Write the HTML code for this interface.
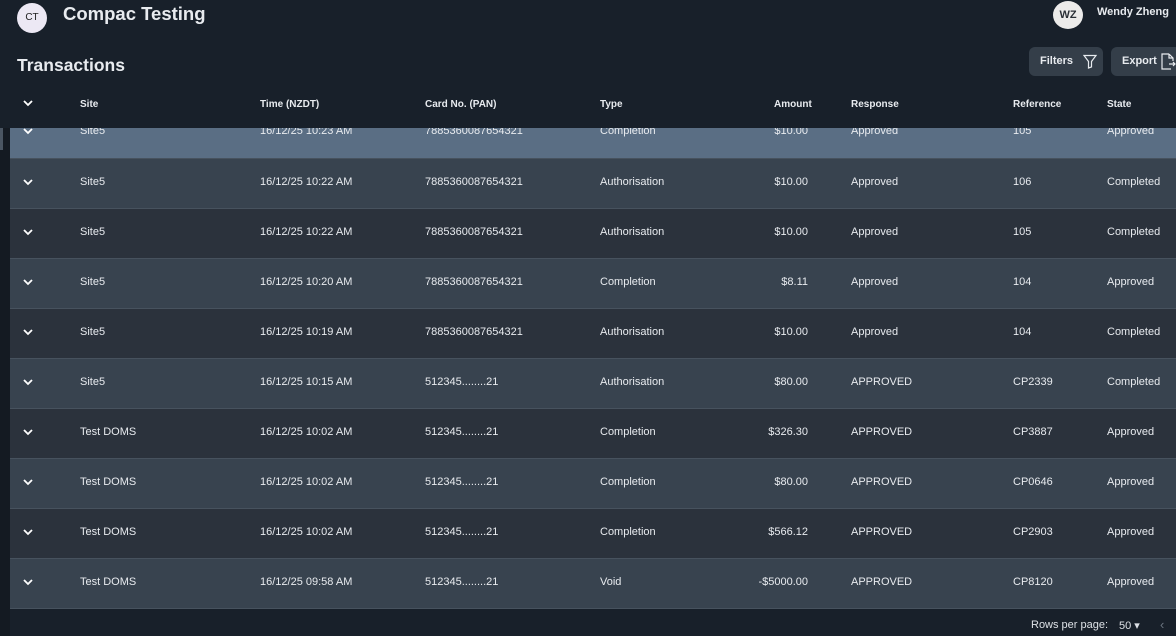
<!DOCTYPE html>
<html><head><style>
*{margin:0;padding:0;box-sizing:border-box}
body{width:1176px;height:636px;background:#18202a;font-family:"Liberation Sans",sans-serif;color:#e8ebef;position:relative;overflow:hidden}
.abs{position:absolute}
.row{position:absolute;left:10px;width:1166px;height:50px;font-size:11px;border-top:1px solid #47525e}
.row span{position:absolute;top:17px;white-space:nowrap}
.hdr span{position:absolute;font-size:10px;font-weight:bold;top:99px}
</style></head><body>
<div class="abs" style="left:0;top:128px;width:10px;height:508px;background:#141a22"></div>
<div class="abs" style="left:0;top:128px;width:3px;height:22px;background:#4a5562"></div>
<div class="abs" style="left:17px;top:3px;width:30px;height:30px;border-radius:50%;background:#ece8f4;color:#222;font-size:10px;text-align:center;line-height:30px">CT</div>
<div class="abs" style="left:63px;top:3px;font-size:18.5px;font-weight:bold">Compac Testing</div>
<div class="abs" style="left:1053px;top:1px;width:30px;height:28px;border-radius:50%;background:#ecebea;color:#2a2f36;font-size:11px;font-weight:bold;text-align:center;line-height:28px">WZ</div>
<div class="abs" style="left:1097px;top:6px;font-size:11px;font-weight:bold">Wendy Zheng</div>
<div class="abs" style="left:17px;top:55px;font-size:17.5px;font-weight:bold">Transactions</div>
<div class="abs" style="left:1029px;top:47px;width:74px;height:29px;border-radius:6px;background:#343e49;font-size:11px;font-weight:bold;line-height:29px;padding-left:11px">Filters
<svg class="abs" style="left:54px;top:7px" width="14" height="15" viewBox="0 0 14 15"><path d="M1 1.5h12L8.5 7.5v5.5L5.5 14V7.5z" fill="none" stroke="#e8ebef" stroke-width="1.2"/></svg></div>
<div class="abs" style="left:1111px;top:47px;width:70px;height:29px;border-radius:6px;background:#343e49;font-size:11px;font-weight:bold;line-height:29px;padding-left:11px">Export
<svg class="abs" style="left:49px;top:6px" width="16" height="17" viewBox="0 0 16 17"><path d="M9 1H2v15h9M9 1v4h4M9 1l4 4v3M9 11h6m-2-2l2 2-2 2" fill="none" stroke="#e8ebef" stroke-width="1.2"/></svg></div>
<div class="hdr">
<svg class="abs" style="left:22px;top:99px" width="12" height="8" viewBox="0 0 12 8"><path d="M2 2l4 4 4-4" fill="none" stroke="#fff" stroke-width="1.8"/></svg>
<span style="left:80px">Site</span><span style="left:260px">Time (NZDT)</span><span style="left:425px">Card No. (PAN)</span><span style="left:600px">Type</span><span style="left:774px">Amount</span><span style="left:851px">Response</span><span style="left:1013px">Reference</span><span style="left:1107px">State</span>
</div>
<div id="rows"></div>
<script>
var d=[["Site5","16/12/25 10:23 AM","7885360087654321","Completion","$10.00","Approved","105","Approved"],
["Site5","16/12/25 10:22 AM","7885360087654321","Authorisation","$10.00","Approved","106","Completed"],
["Site5","16/12/25 10:22 AM","7885360087654321","Authorisation","$10.00","Approved","105","Completed"],
["Site5","16/12/25 10:20 AM","7885360087654321","Completion","$8.11","Approved","104","Approved"],
["Site5","16/12/25 10:19 AM","7885360087654321","Authorisation","$10.00","Approved","104","Completed"],
["Site5","16/12/25 10:15 AM","512345........21","Authorisation","$80.00","APPROVED","CP2339","Completed"],
["Test DOMS","16/12/25 10:02 AM","512345........21","Completion","$326.30","APPROVED","CP3887","Approved"],
["Test DOMS","16/12/25 10:02 AM","512345........21","Completion","$80.00","APPROVED","CP0646","Approved"],
["Test DOMS","16/12/25 10:02 AM","512345........21","Completion","$566.12","APPROVED","CP2903","Approved"],
["Test DOMS","16/12/25 09:58 AM","512345........21","Void","-$5000.00","APPROVED","CP8120","Approved"]];
var h="";
d.forEach(function(r,i){
var top=108+i*50,bg=i==0?"#5a6e84":(i%2?"#38434f":"#2b323c");
var st=i==0?"top:128px;height:30px;border-top:none;":"top:"+(top)+"px;";
var inner=i==0?'<div style="position:absolute;left:0;top:-20px;width:100%;height:50px">':'<div style="position:absolute;left:0;top:0;width:100%;height:50px">';
h+='<div class="row" style="'+st+'background:'+bg+';overflow:hidden">'+inner+
'<svg class="abs" style="left:12px;top:19px" width="12" height="8" viewBox="0 0 12 8"><path d="M2 2l4 4 4-4" fill="none" stroke="#fff" stroke-width="1.8"/></svg>'+
'<span style="left:70px">'+r[0]+'</span><span style="left:250px">'+r[1]+'</span><span style="left:415px">'+r[2]+'</span><span style="left:590px">'+r[3]+'</span><span style="right:368px">'+r[4]+'</span><span style="left:841px">'+r[5]+'</span><span style="left:1003px">'+r[6]+'</span><span style="left:1097px">'+r[7]+'</span></div></div>';
});
document.getElementById("rows").innerHTML=h;
</script>
<div class="abs" style="left:10px;top:608px;width:1166px;height:1px;background:#47525e"></div>
<div class="abs" style="left:1031px;top:619px;font-size:11px;color:#dde1e6">Rows per page:</div>
<div class="abs" style="left:1119px;top:619px;font-size:11px;color:#dde1e6">50 ▾</div>
<div class="abs" style="left:1160px;top:617px;font-size:13px;color:#6b7580">‹</div>
</body></html>
